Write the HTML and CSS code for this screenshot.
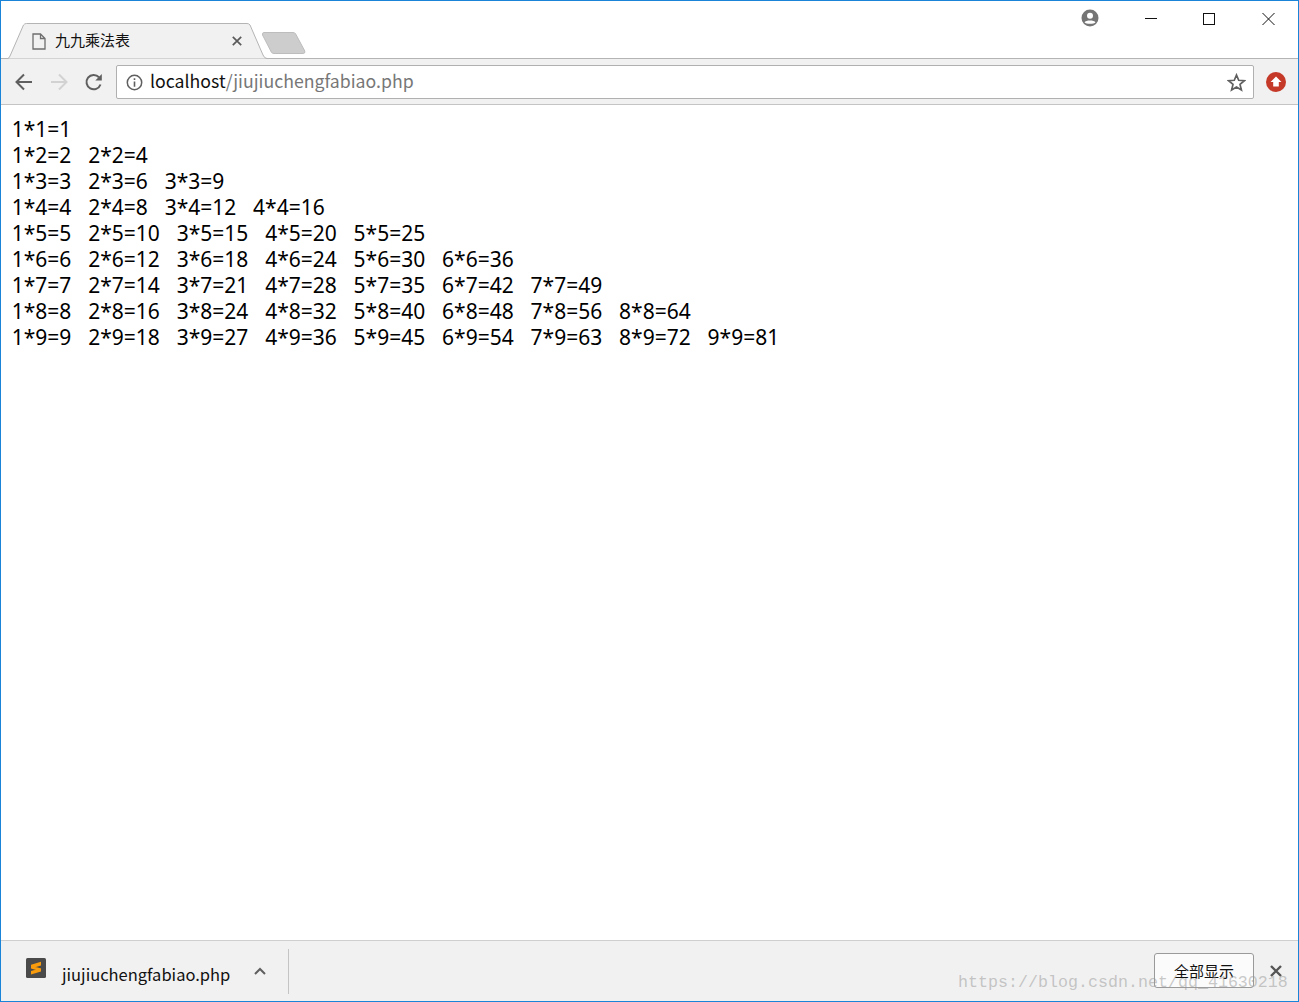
FILE: index.html
```html
<!DOCTYPE html>
<html lang="zh">
<head>
<meta charset="utf-8">
<title>九九乘法表</title>
<link rel="stylesheet" href="styles.css">
</head>
<body>
<div class="window">
  <header class="titlebar">
    <div class="tab">
      <svg class="tab-shape" width="260" height="36" viewBox="0 0 260 36"><path d="M0 35.500H.5Q2 35.500 3 33L16.500 2Q17.500 .5 19.500 .5H240Q242 .5 243 2L256 32Q257.500 35.500 260 35.500" fill="#f1f1f1" stroke="#b4b4b4"/></svg>
      <svg class="tab-page" width="14" height="17" viewBox="0 0 14 17"><path d="M1 1H8.500L13 5.500V16H1ZM8.500 1V5.500H13" fill="#f1f1f1" stroke="#6e6e6e" stroke-width="1.300"/></svg>
      <span class="tab-title">九九乘法表</span>
      <svg class="tab-close" width="10" height="10" viewBox="0 0 10 10"><path d="M.8.800 9.200 9.200M9.200.800.800 9.200" stroke="#5a5a5a" stroke-width="1.700"/></svg>
    </div>
    <svg class="new-tab" width="44" height="22" viewBox="0 0 44 22"><path d="M2 .5H31Q33 .5 33.700 2L42.800 19Q43.500 21.500 41 21.500H12Q10 21.500 9.300 20L.5 3Q0 .5 2 .5Z" fill="#cdcdcd" stroke="#bdbdbd"/></svg>
    <div class="spacer"></div>
    <svg class="profile" width="18" height="18" viewBox="0 0 18 18"><circle cx="9" cy="9" r="8.500" fill="#757575"/><circle cx="9" cy="6.800" r="3" fill="#fff"/><path d="M3.500 13.200C5 10.800 13 10.800 14.500 13.200C13 15.300 5 15.300 3.500 13.200Z" fill="#fff"/></svg>
    <div class="win-controls">
      <svg width="58" height="36" viewBox="0 0 58 36"><path d="M23 17.500H35" stroke="#111"/></svg>
      <svg width="58" height="36" viewBox="0 0 58 36"><rect x="23.500" y="12.500" width="11" height="11" fill="none" stroke="#111"/></svg>
      <svg width="58" height="36" viewBox="0 0 58 36"><path d="M24.500 12 36.500 24M36.500 12 24.500 24" stroke="#111" fill="none"/></svg>
    </div>
  </header>
  <nav class="toolbar">
    <svg class="nav-icon" width="20" height="20" viewBox="0 0 20 20"><path d="M18 10H3M10 2.500 2.500 10 10 17.500" fill="none" stroke="#5f5f5f" stroke-width="2"/></svg>
    <svg class="nav-icon" width="20" height="20" viewBox="0 0 20 20"><path d="M2 10H17M10 2.500 17.500 10 10 17.500" fill="none" stroke="#d2d2d2" stroke-width="2"/></svg>
    <svg class="nav-icon" width="20" height="20" viewBox="0 0 20 20"><path d="M16.500 12.500A7.200 7.200 0 1 1 15 5.200" fill="none" stroke="#5f5f5f" stroke-width="2"/><path d="M17.800 2V8.500H11.300Z" fill="#5f5f5f"/></svg>
    <div class="omnibox">
      <svg class="info" width="17" height="17" viewBox="0 0 17 17"><circle cx="8.500" cy="8.500" r="7.200" fill="none" stroke="#5f5f5f" stroke-width="1.500"/><path d="M7.700 7.500H9.300V12.800H7.700ZM7.700 4.300H9.300V5.900H7.700Z" fill="#5f5f5f"/></svg>
      <span class="url"><span class="host">localhost</span>/jiujiuchengfabiao.php</span>
      <svg class="star" width="19" height="19" viewBox="0 0 19 19"><path d="M9.500 2 11.700 7.300 17.400 7.700 13 11.400 14.400 17 9.500 14 4.600 17 6 11.400 1.600 7.700 7.300 7.300Z" fill="none" stroke="#5f5f5f" stroke-width="1.700"/></svg>
    </div>
    <svg class="ext" width="20" height="20" viewBox="0 0 20 20"><circle cx="10" cy="10" r="10" fill="#c53929"/><path d="M10 4.500 15.500 10H12.800V14.500H7.200V10H4.500Z" fill="#fff"/></svg>
  </nav>
  <main class="content">
    <div class="row"><span>1*1=1</span></div>
    <div class="row"><span>1*2=2</span><span>2*2=4</span></div>
    <div class="row"><span>1*3=3</span><span>2*3=6</span><span>3*3=9</span></div>
    <div class="row"><span>1*4=4</span><span>2*4=8</span><span>3*4=12</span><span>4*4=16</span></div>
    <div class="row"><span>1*5=5</span><span>2*5=10</span><span>3*5=15</span><span>4*5=20</span><span>5*5=25</span></div>
    <div class="row"><span>1*6=6</span><span>2*6=12</span><span>3*6=18</span><span>4*6=24</span><span>5*6=30</span><span>6*6=36</span></div>
    <div class="row"><span>1*7=7</span><span>2*7=14</span><span>3*7=21</span><span>4*7=28</span><span>5*7=35</span><span>6*7=42</span><span>7*7=49</span></div>
    <div class="row"><span>1*8=8</span><span>2*8=16</span><span>3*8=24</span><span>4*8=32</span><span>5*8=40</span><span>6*8=48</span><span>7*8=56</span><span>8*8=64</span></div>
    <div class="row"><span>1*9=9</span><span>2*9=18</span><span>3*9=27</span><span>4*9=36</span><span>5*9=45</span><span>6*9=54</span><span>7*9=63</span><span>8*9=72</span><span>9*9=81</span></div>
  </main>
  <footer class="downloads">
    <svg class="file-icon" width="20" height="20" viewBox="0 0 20 20"><rect width="20" height="20" rx="1.500" fill="#4a4a4a"/><path d="M15 3.800V7.400L5 10.400V6.800ZM5 7.500 15 10.500V13.500L5 10.500ZM15 10.200V13.400L5 16.400V13Z" fill="#f89c0e"/></svg>
    <span class="file-name">jiujiuchengfabiao.php</span>
    <svg class="chevron" width="12" height="8" viewBox="0 0 12 8"><path d="M1 7 6 2 11 7" fill="none" stroke="#5f5f5f" stroke-width="2"/></svg>
    <div class="divider"></div>
    <div class="spacer"></div>
    <button class="show-all">全部显示</button>
    <svg class="bar-close" width="12" height="12" viewBox="0 0 12 12"><path d="M1 1 11 11M11 1 1 11" stroke="#555" stroke-width="2.400"/></svg>
    <span class="watermark">https://blog.csdn.net/qq_41630218</span>
  </footer>
</div>
</body>
</html>
```
FILE: styles.css
```css
* { box-sizing: border-box; }
html, body { margin: 0; padding: 0; }
body { width: 1299px; height: 1002px; overflow: hidden; background: #fff; font-family: "Noto Sans CJK SC", "Noto Sans", sans-serif; }
.window { width: 1299px; height: 1002px; border: 1px solid #1a84d8; display: flex; flex-direction: column; background: #fff; }
.titlebar { height: 58px; flex: none; display: flex; align-items: flex-start; border-bottom: 1px solid #b4b4b4; }
.spacer { flex: 1; }
.tab { position: relative; width: 250px; height: 36px; margin: 22px 0 -1px 6px; display: flex; align-items: center; }
.tab-shape { position: absolute; left: 0; top: 0; }
.tab-page { position: relative; margin-left: 25px; }
.tab-title { position: relative; top: -1px; margin-left: 9px; font-size: 15px; color: #111; width: 177px; line-height: 20px; }
.tab-close { position: relative; }
.new-tab { margin: 31px 0 0 5px; }
.profile { margin: 8px 23px 0 0; }
.win-controls { display: flex; margin-right: 2px; }
.win-controls svg { display: block; }
.toolbar { height: 46px; flex: none; background: #f1f1f1; border-bottom: 1px solid #c4c4c4; display: flex; align-items: center; padding: 0 12px 0 13px; }
.nav-icon { flex: none; margin-right: 15px; }
.nav-icon:nth-of-type(3) { margin-right: 12px; }
.omnibox { width: 1138px; height: 34px; flex: none; background: #fff; border: 1px solid #b0b0b0; border-radius: 2px; display: flex; align-items: center; padding: 1px 7px 0 9px; }
.info { flex: none; }
.url { flex: 1; margin: -5px 0 0 7px; font-size: 17.700px; line-height: 24px; color: #777; white-space: nowrap; }
.host { color: #111; }
.star { flex: none; }
.ext { flex: none; margin-left: 12px; }
.content { flex: 1; padding: 11px 0 0 10.700px; font-family: "Noto Sans", sans-serif; font-size: 21px; line-height: 26px; color: #000; }
.row { display: flex; gap: 16.850px; height: 26px; white-space: nowrap; }
.downloads { position: relative; height: 61px; flex: none; background: #f1f1f1; border-top: 1px solid #cfcfcf; display: flex; align-items: center; }
.file-icon { margin: -6px 0 0 25px; flex: none; }
.file-name { margin: 5px 0 0 16px; font-size: 16.500px; line-height: 24px; color: #111; }
.chevron { margin: 0 0 0 24px; flex: none; }
.divider { width: 1px; height: 45px; margin-left: 22px; background: #c4c4c4; }
.show-all { width: 100px; height: 35px; margin: -2px 16px 0 0; background: #fbfbfb; border: 1px solid #9a9a9a; border-radius: 3px; font-family: inherit; font-size: 15px; color: #111; padding: 0; }
.bar-close { margin-right: 16px; flex: none; }
.watermark { position: absolute; left: 957px; top: 31px; font-family: "Liberation Mono", monospace; font-size: 16.670px; line-height: 22px; color: rgba(150,150,150,.5); white-space: nowrap; }
```
